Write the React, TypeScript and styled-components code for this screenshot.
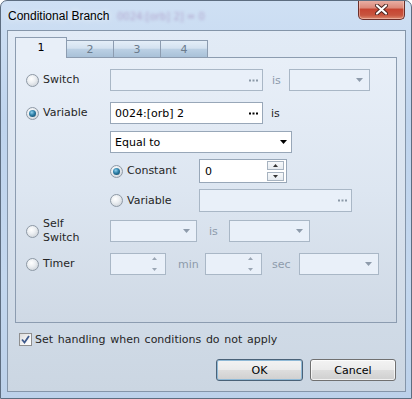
import React from "react";
import styled, { createGlobalStyle, css } from "styled-components";

const Global = createGlobalStyle`
  html, body { margin: 0; padding: 0; background: #ffffff; }
  body { font-family: "DejaVu Sans", Verdana, sans-serif; font-size: 11px; color: #262626; }
`;

const Window = styled.div`
  position: relative;
  box-sizing: border-box;
  width: 412px;
  height: 399px;
  border: 1px solid #5d6d80;
  border-radius: 7px 7px 0 0;
  background: linear-gradient(180deg, #cfe0f4 0%, #bfd4ed 30%, #c3d7ee 70%, #bcd1ea 100%);
  display: flex;
  flex-direction: column;
  overflow: hidden;
`;

const TitleBar = styled.div`
  position: relative;
  height: 29px;
  display: flex;
  align-items: center;
  padding-left: 7px;
  flex: none;
`;

const Title = styled.span`
  font-family: "Segoe UI", "Liberation Sans", Arial, sans-serif;
  font-size: 12px;
  color: #000;
  position: relative;
  z-index: 1;
  text-shadow: 0 0 6px rgba(255, 255, 255, 0.9);
`;

const Ghost = styled.span`
  position: absolute;
  left: 116px;
  top: 10px;
  font-family: "DejaVu Sans", sans-serif;
  font-size: 10px;
  color: rgba(150, 110, 170, 0.5);
  filter: blur(1.4px);
  white-space: nowrap;
`;

const CloseButton = styled.div`
  align-self: flex-start;
  margin: -1px 6px 0 auto;
  box-sizing: border-box;
  width: 47px;
  height: 20px;
  border: 1px solid #6b2f2a;
  border-top: none;
  border-radius: 0 0 5px 5px;
  background: linear-gradient(180deg, #eab3a9 0%, #dc8a7b 40%, #c64532 50%, #c8553f 80%, #dc8b70 100%);
  box-shadow: inset 0 0 0 1px rgba(255, 220, 210, 0.45);
  display: flex;
  align-items: center;
  justify-content: center;
`;

const Client = styled.div`
  flex: 1;
  margin: 0 5px 6px 6px;
  box-sizing: border-box;
  border: 1px solid #8495a9;
  background: linear-gradient(180deg, #e2ebf6 0%, #d8e2ee 50%, #cbd6e2 100%);
  padding: 6px 0 0 7px;
  display: flex;
  flex-direction: column;
`;

const TabStrip = styled.div`
  display: flex;
  align-items: flex-end;
  height: 21px;
  margin-bottom: -1px;
  position: relative;
  z-index: 1;
`;

const Tab = styled.div<{ $active?: boolean }>`
  box-sizing: border-box;
  display: flex;
  align-items: center;
  justify-content: center;
  border: 1px solid #8c9cb0;
  ${(p) =>
    p.$active
      ? css`
          width: 52px;
          height: 21px;
          border-bottom: none;
          background: #e8eff8;
          color: #000;
          padding-bottom: 1px;
        `
      : css`
          width: 48px;
          height: 18px;
          margin-left: -1px;
          background: linear-gradient(180deg, #e4eef8 0%, #d4e2f0 45%, #bbd0e4 52%, #a9c1d8 100%);
          color: #6b7b8c;
          padding-top: 1px;
        `}
`;

const Panel = styled.div`
  box-sizing: border-box;
  width: 382px;
  height: 266px;
  border: 1px solid #8c9cb0;
  background: linear-gradient(180deg, #e8eff8 0%, #dde6f1 50%, #cfd9e5 100%);
  padding: 0 0 0 10px;
  display: flex;
  flex-direction: column;
`;

const Row = styled.div<{ $mt: number; $h?: number; $indent?: number }>`
  display: flex;
  align-items: center;
  height: ${(p) => p.$h ?? 22}px;
  margin-top: ${(p) => p.$mt}px;
  padding-left: ${(p) => p.$indent ?? 0}px;
`;

const Choice = styled.div<{ $w: number }>`
  box-sizing: border-box;
  display: flex;
  align-items: center;
  gap: 4px;
  width: ${(p) => p.$w}px;
  flex: none;
  line-height: 14px;
`;

const Radio = styled.span<{ $on?: boolean }>`
  position: relative;
  box-sizing: border-box;
  width: 13px;
  height: 13px;
  flex: none;
  border-radius: 50%;
  border: 1px solid #8e99a5;
  background: radial-gradient(circle at 40% 35%, #ffffff 0%, #eceff2 40%, #c3c9d0 100%);
  ${(p) =>
    p.$on &&
    css`
      &::after {
        content: "";
        position: absolute;
        left: 2px;
        top: 2px;
        width: 7px;
        height: 7px;
        border-radius: 50%;
        background: radial-gradient(circle at 40% 35%, #8fd0ee 0%, #2c7ea6 45%, #0f3c58 100%);
      }
    `}
`;

const Field = styled.div<{ $w: number; $h?: number; $off?: boolean }>`
  box-sizing: border-box;
  width: ${(p) => p.$w}px;
  height: ${(p) => p.$h ?? 22}px;
  flex: none;
  display: flex;
  align-items: center;
  justify-content: space-between;
  padding: 0 4px;
  border: 1px solid ${(p) => (p.$off ? "#a9b7c6" : "#98a7b8")};
  background: ${(p) => (p.$off ? "#e9f0f9" : "#ffffff")};
  color: #000;
  white-space: nowrap;
  overflow: hidden;
`;

const NumberBox = styled.div`
  box-sizing: border-box;
  width: 88px;
  height: 24px;
  flex: none;
  display: flex;
  align-items: center;
  padding: 0 2px 0 5px;
  border: 1px solid #98a7b8;
  background: #ffffff;
  color: #000;
`;

const Value = styled.span`
  flex: 1;
  min-width: 0;
`;

const Spin = styled.div`
  display: flex;
  flex-direction: column;
  gap: 2px;
  flex: none;
`;

const SpinBtn = styled.div<{ $off?: boolean }>`
  box-sizing: border-box;
  height: 9px;
  display: flex;
  align-items: center;
  justify-content: center;
  ${(p) =>
    p.$off
      ? css`
          width: 13px;
        `
      : css`
          width: 17px;
          border: 1px solid #a7b3c0;
          background: linear-gradient(180deg, #f7f9fb 0%, #e6ebf0 100%);
        `}
`;

const Word = styled.span<{ $w: number; $pl: number; $off?: boolean }>`
  box-sizing: border-box;
  width: ${(p) => p.$w}px;
  padding-left: ${(p) => p.$pl}px;
  flex: none;
  color: ${(p) => (p.$off ? "#8d9bab" : "#262626")};
`;

const CheckRow = styled.div`
  display: flex;
  align-items: center;
  gap: 3px;
  margin: 10px 0 0 4px;
  height: 13px;
  word-spacing: 1.2px;
`;

const CheckBox = styled.span`
  box-sizing: border-box;
  width: 13px;
  height: 13px;
  flex: none;
  border: 1px solid #8f8f8f;
  background: linear-gradient(135deg, #dcdcdc 0%, #f6f6f6 60%, #ffffff 100%);
  display: flex;
  align-items: center;
  justify-content: center;
`;

const ButtonRow = styled.div`
  display: flex;
  justify-content: flex-end;
  gap: 7px;
  width: 382px;
  margin-top: 13px;
`;

const Button = styled.div<{ $w: number; $default?: boolean }>`
  box-sizing: border-box;
  width: ${(p) => p.$w}px;
  height: 22px;
  margin-right: ${(p) => (p.$default ? 0 : 1)}px;
  border-radius: 3px;
  border: 1px solid ${(p) => (p.$default ? "#4a6278" : "#707070")};
  background: linear-gradient(180deg, #f3f3f3 0%, #ebebeb 48%, #dddddd 52%, #cfcfcf 100%);
  box-shadow: ${(p) =>
    p.$default ? "inset 0 0 0 1px #8fb9d6" : "inset 0 0 0 1px rgba(255,255,255,0.7)"};
  display: flex;
  align-items: center;
  justify-content: center;
  color: #000;
`;

function DotsIcon({ off }: { off?: boolean }) {
  const c = off ? "#8c99a8" : "#000";
  return (
    <svg width="9" height="3" viewBox="0 0 9 3" style={{ flex: "none" }}>
      <rect x="0" y="0.5" width="2" height="2" fill={c} />
      <rect x="3.5" y="0.5" width="2" height="2" fill={c} />
      <rect x="7" y="0.5" width="2" height="2" fill={c} />
    </svg>
  );
}

function DownArrow({ off, mr }: { off?: boolean; mr: number }) {
  return (
    <svg width="7" height="4" viewBox="0 0 7 4" style={{ marginRight: mr, flex: "none" }}>
      <path d="M0 0 H7 L3.5 4 Z" fill={off ? "#8e9bab" : "#000"} />
    </svg>
  );
}

function SpinArrows({ off }: { off?: boolean }) {
  const c = off ? "#9aa6b4" : "#333";
  return (
    <Spin>
      <SpinBtn $off={off}>
        <svg width="5" height="3" viewBox="0 0 5 3">
          <path d="M0 3 H5 L2.5 0 Z" fill={c} />
        </svg>
      </SpinBtn>
      <SpinBtn $off={off}>
        <svg width="5" height="3" viewBox="0 0 5 3">
          <path d="M0 0 H5 L2.5 3 Z" fill={c} />
        </svg>
      </SpinBtn>
    </Spin>
  );
}

export default function App() {
  return (
    <>
      <Global />
      <Window>
        <TitleBar>
          <Title>Conditional Branch</Title>
          <Ghost>0024:[orb] 2] = 0</Ghost>
          <CloseButton>
            <svg width="13" height="11" viewBox="0 0 13 11">
              <path d="M2 1.5 L11 9.5 M11 1.5 L2 9.5" stroke="#4a2420" strokeWidth="4" strokeLinecap="round" />
              <path d="M2 1.5 L11 9.5 M11 1.5 L2 9.5" stroke="#ffffff" strokeWidth="2.2" strokeLinecap="round" />
            </svg>
          </CloseButton>
        </TitleBar>
        <Client>
          <TabStrip>
            <Tab $active>1</Tab>
            <Tab>2</Tab>
            <Tab>3</Tab>
            <Tab>4</Tab>
          </TabStrip>
          <Panel>
            <Row $mt={11}>
              <Choice $w={84}>
                <Radio />
                Switch
              </Choice>
              <Field $w={153} $off>
                <Value />
                <DotsIcon off />
              </Field>
              <Word $w={26} $pl={9} $off>
                is
              </Word>
              <Field $w={81} $off>
                <Value />
                <DownArrow off mr={2} />
              </Field>
            </Row>
            <Row $mt={11}>
              <Choice $w={84}>
                <Radio $on />
                Variable
              </Choice>
              <Field $w={153}>
                <Value>0024:[orb] 2</Value>
                <DotsIcon />
              </Field>
              <Word $w={26} $pl={8}>
                is
              </Word>
            </Row>
            <Row $mt={7} $indent={84}>
              <Field $w={182}>
                <Value>Equal to</Value>
                <DownArrow mr={0} />
              </Field>
            </Row>
            <Row $mt={6} $h={24} $indent={84}>
              <Choice $w={89}>
                <Radio $on />
                Constant
              </Choice>
              <NumberBox>
                <Value>0</Value>
                <SpinArrows />
              </NumberBox>
            </Row>
            <Row $mt={6} $h={23} $indent={84}>
              <Choice $w={89}>
                <Radio />
                Variable
              </Choice>
              <Field $w={153} $h={23} $off>
                <Value />
                <DotsIcon off />
              </Field>
            </Row>
            <Row $mt={8}>
              <Choice $w={84}>
                <Radio />
                <span>
                  Self
                  <br />
                  Switch
                </span>
              </Choice>
              <Field $w={87} $off>
                <Value />
                <DownArrow off mr={2} />
              </Field>
              <Word $w={32} $pl={12} $off>
                is
              </Word>
              <Field $w={81} $off>
                <Value />
                <DownArrow off mr={2} />
              </Field>
            </Row>
            <Row $mt={11}>
              <Choice $w={84}>
                <Radio />
                Timer
              </Choice>
              <Field $w={56} $off>
                <Value />
                <SpinArrows off />
              </Field>
              <Word $w={39} $pl={12} $off>
                min
              </Word>
              <Field $w={57} $off>
                <Value />
                <SpinArrows off />
              </Field>
              <Word $w={37} $pl={10} $off>
                sec
              </Word>
              <Field $w={80} $off>
                <Value />
                <DownArrow off mr={2} />
              </Field>
            </Row>
          </Panel>
          <CheckRow>
            <CheckBox>
              <svg width="9" height="9" viewBox="0 0 9 9">
                <path d="M1 4.5 L3.5 7.5 L8 1" stroke="#3f5a8c" strokeWidth="1.8" fill="none" />
              </svg>
            </CheckBox>
            Set handling when conditions do not apply
          </CheckRow>
          <ButtonRow>
            <Button $w={87} $default>
              OK
            </Button>
            <Button $w={86}>Cancel</Button>
          </ButtonRow>
        </Client>
      </Window>
    </>
  );
}
